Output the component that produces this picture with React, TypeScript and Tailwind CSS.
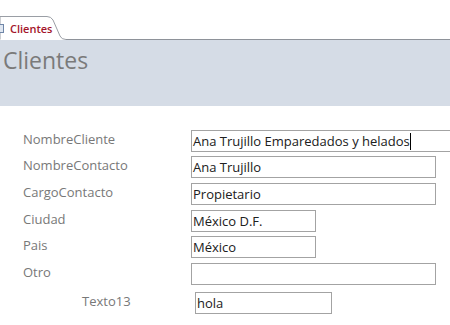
import React from "react";

const font = { fontFamily: '"Open Sans", "Noto Sans", sans-serif' };

const boxClass =
  "h-[22px] border border-[#a3a3a3] bg-white px-[1px] text-[13px] leading-[20px] text-[#202020] whitespace-nowrap overflow-hidden";

type Row = {
  label: string;
  value: string;
  width: string;
  mt: string;
  cursor?: boolean;
};

const rows: Row[] = [
  { label: "NombreCliente", value: "Ana Trujillo Emparedados y helados", width: "w-[290px]", mt: "mt-0", cursor: true },
  { label: "NombreContacto", value: "Ana Trujillo", width: "w-[245px]", mt: "mt-[4px]" },
  { label: "CargoContacto", value: "Propietario", width: "w-[245px]", mt: "mt-[5px]" },
  { label: "Ciudad", value: "México D.F.", width: "w-[125px]", mt: "mt-[5px]" },
  { label: "Pais", value: "México", width: "w-[125px]", mt: "mt-[4px]" },
  { label: "Otro", value: "", width: "w-[245px]", mt: "mt-[5px]" },
];

export default function App() {
  return (
    <div className="w-[450px] h-[325px] overflow-hidden bg-white" style={font}>
      {/* TAB STRIP */}
      <div className="flex items-end h-[40px]">
        <div className="relative w-[66px] h-[25px] shrink-0">
          <svg className="absolute inset-0" width="66" height="25" viewBox="0 0 66 25">
            <path
              d="M0 24.5 L0 1.5 L47 1.5 Q51 1.5 53 5 L60 21 Q61.5 24.5 66 24.5"
              fill="#ffffff"
              stroke="#9a9ea5"
              strokeWidth="1"
            />
          </svg>
          <div className="relative flex items-center h-full pt-[2px]">
            <div className="w-[4px] h-[9px] border border-[#6f86a8] border-l-0 bg-[#dfe6f0]" />
            <span className="ml-[6px] text-[11px] font-semibold text-[#a3142a] leading-none">
              Clientes
            </span>
          </div>
        </div>
        <div className="flex-1 h-[1px] bg-[#8e9299]" />
      </div>

      {/* HEADER */}
      <div className="h-[66px] bg-[#d5dce6] px-[3px] pt-[5px]">
        <h1 className="text-[23px] leading-[30px] text-[#7a7a7a]">Clientes</h1>
      </div>

      {/* FORM */}
      <div className="flex flex-col pt-[24px]">
        {rows.map((r) => (
          <div key={r.label} className={`flex items-center ${r.mt}`}>
            <span className="w-[191px] pl-[23px] pb-[4px] text-[13px] leading-[16px] text-[#787878] shrink-0">
              {r.label}
            </span>
            <div className={`${boxClass} ${r.width} shrink-0 flex items-center`}>
              <span>{r.value}</span>
              {r.cursor && <span className="w-[1px] h-[17px] bg-black" />}
            </div>
          </div>
        ))}

        <div className="flex items-center mt-[7px]">
          <span className="w-[195px] pl-[82px] pb-[4px] text-[13px] leading-[16px] text-[#787878] shrink-0">
            Texto13
          </span>
          <div className={`${boxClass} w-[137px] shrink-0`}>hola</div>
        </div>
      </div>
    </div>
  );
}
